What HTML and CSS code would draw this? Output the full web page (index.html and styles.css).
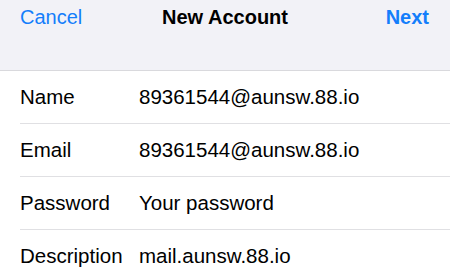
FILE: index.html
```html
<!DOCTYPE html>
<html>
<head>
<meta charset="utf-8">
<link rel="stylesheet" href="styles.css">
</head>
<body>
<div class="header">
  <div class="nav">
    <span class="btn">Cancel</span>
    <span class="title">New Account</span>
    <span class="btn bold">Next</span>
  </div>
</div>
<div class="list">
  <div class="row"><span class="label">Name</span><span class="value">89361544@aunsw.88.io</span></div>
  <div class="row"><span class="label">Email</span><span class="value">89361544@aunsw.88.io</span></div>
  <div class="row"><span class="label">Password</span><span class="value">Your password</span></div>
  <div class="row"><span class="label">Description</span><span class="value">mail.aunsw.88.io</span></div>
</div>
</body>
</html>
```
FILE: styles.css
```css
html, body {
  margin: 0;
  padding: 0;
  background: #ffffff;
  font-family: "Liberation Sans", Arial, sans-serif;
  color: #000;
  width: 450px;
  height: 280px;
  overflow: hidden;
}
.header {
  height: 70px;
  background: #f2f2f7;
  border-bottom: 1px solid #d9d9dd;
}
.nav {
  display: flex;
  justify-content: space-between;
  align-items: center;
  height: 34px;
  padding: 0 21px 0 20px;
  position: relative;
}
.btn {
  color: #147efb;
  font-size: 20px;
}
.btn.bold {
  font-weight: bold;
}
.title {
  font-weight: bold;
  font-size: 20px;
  position: absolute;
  left: 0;
  right: 0;
  text-align: center;
  pointer-events: none;
}
.list {
  padding-left: 20px;
}
.row {
  display: flex;
  align-items: center;
  height: 52px;
  border-bottom: 1px solid #e0e0e3;
  font-size: 20.5px;
}
.label {
  width: 119px;
  flex: none;
}
.value {
  flex: 1;
}
```
